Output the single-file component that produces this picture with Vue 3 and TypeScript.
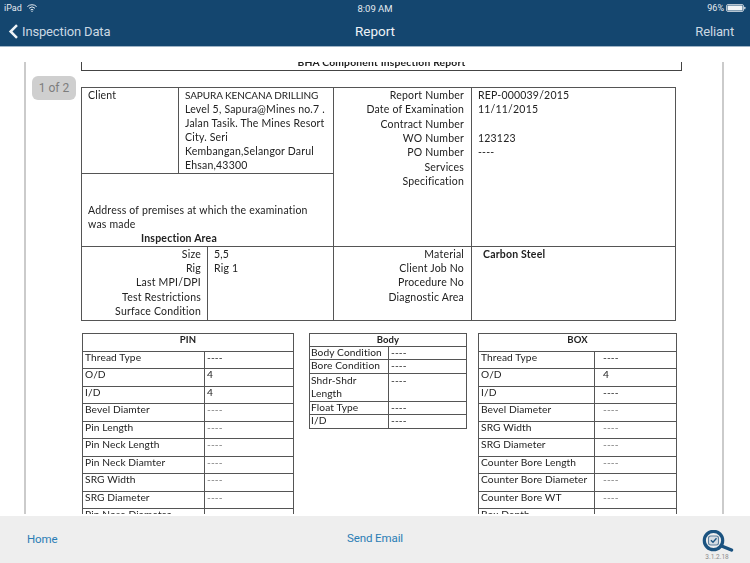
<template>
  <div class="screen">
    <header class="topbar">
      <div class="status">
        <div class="status-left">
          <span>iPad</span>
          <svg class="wifi" width="10" height="8" viewBox="0 0 10 8">
            <path d="M0.4 2.6 A6.6 6.6 0 0 1 9.6 2.6" />
            <path d="M2 4.3 A4.3 4.3 0 0 1 8 4.3" />
            <path d="M3.6 5.9 A2 2 0 0 1 6.4 5.9" />
            <circle cx="5" cy="7.2" r="0.7" />
          </svg>
        </div>
        <span class="status-time">8:09 AM</span>
        <div class="status-right">
          <span>96%</span>
          <svg width="20" height="8" viewBox="0 0 20 8">
            <rect x="0.5" y="0.5" width="17" height="7" rx="1.5" fill="none" stroke="#dfe6ec" stroke-width="0.8" />
            <rect x="1.5" y="1.5" width="15" height="5" rx="0.6" fill="#f2f5f7" />
            <rect x="18.2" y="2.7" width="1.2" height="2.6" rx="0.5" fill="#dfe6ec" />
          </svg>
        </div>
      </div>
      <nav class="navbar">
        <a class="back">
          <svg width="11" height="15" viewBox="0 0 11 15">
            <path d="M9 1.2 L2.6 7.5 L9 13.8" fill="none" stroke="#eef3f7" stroke-width="2.5" />
          </svg>
          <span>Inspection Data</span>
        </a>
        <span class="nav-title">Report</span>
        <span class="nav-right">Reliant</span>
      </nav>
    </header>

    <main class="viewer">
      <div class="page-badge">1 of 2</div>
      <section class="sheet">
        <div class="doc-title"><span>BHA Component Inspection Report</span></div>

        <table class="summary">
          <colgroup>
            <col style="width: 97px" />
            <col style="width: 29px" />
            <col style="width: 126px" />
            <col style="width: 138px" />
            <col style="width: 204px" />
          </colgroup>
          <tbody>
            <tr class="row-client">
              <td>Client</td>
              <td colspan="2" class="client-value">
                <div v-for="(line, i) in clientLines" :key="line" :class="{ caps: i === 0 }">{{ line }}</div>
              </td>
              <td rowspan="2" class="labels">
                <div v-for="line in reportLabels" :key="line">{{ line }}</div>
              </td>
              <td rowspan="2" class="values">
                <div v-for="(line, i) in reportValues" :key="i" class="line">{{ line }}</div>
              </td>
            </tr>
            <tr class="row-address">
              <td colspan="3" class="address">
                <div>Address of premises at which the examination</div>
                <div>was made</div>
                <div class="area-title">Inspection Area</div>
              </td>
            </tr>
            <tr class="row-area">
              <td colspan="2" class="labels tight">
                <div v-for="line in areaLabels" :key="line">{{ line }}</div>
              </td>
              <td class="area-value">
                <div>5,5</div>
                <div>Rig 1</div>
              </td>
              <td class="labels">
                <div>Material</div>
                <div>Client Job No</div>
                <div>Procedure No</div>
                <div>Diagnostic Area</div>
              </td>
              <td class="values"><div class="material">Carbon Steel</div></td>
            </tr>
          </tbody>
        </table>

        <div class="parts">
          <table v-for="part in parts" :key="part.title" class="part" :class="part.kind">
            <colgroup>
              <col class="col-name" />
              <col />
            </colgroup>
            <thead>
              <tr><th colspan="2">{{ part.title }}</th></tr>
            </thead>
            <tbody>
              <tr v-for="row in part.rows" :key="row[0]">
                <td class="name">{{ row[0] }}</td>
                <td class="val">{{ row[1] }}</td>
              </tr>
            </tbody>
          </table>
        </div>
      </section>
    </main>

    <footer class="toolbar">
      <a class="tool-left">Home</a>
      <a class="tool-center">Send Email</a>
      <div class="tool-right">
        <svg width="34" height="22" viewBox="0 0 34 22">
          <circle cx="13.5" cy="10.5" r="9.2" fill="none" stroke="#1b5380" stroke-width="3.2" />
          <rect x="8.5" y="6" width="10" height="9" rx="2.2" fill="#d5dde4" stroke="#5d7f9c" stroke-width="1.1" />
          <path d="M10.9 10.3 L13 12.3 L16.5 8.3" fill="none" stroke="#1b5380" stroke-width="1.3" />
          <path d="M21.5 16 L31.5 20" fill="none" stroke="#1b5380" stroke-width="3.4" stroke-linecap="round" />
        </svg>
        <span class="version">3.1.2.18</span>
      </div>
    </footer>
  </div>
</template>

<script setup lang="ts">
type Row = [string, string]

interface Part {
  title: string
  kind: string
  rows: Row[]
}

const clientLines = [
  'SAPURA KENCANA DRILLING',
  'Level 5, Sapura@Mines no.7 .',
  'Jalan Tasik. The Mines Resort',
  'City. Seri',
  'Kembangan,Selangor Darul',
  'Ehsan,43300'
]

const reportLabels = [
  'Report Number',
  'Date of Examination',
  'Contract Number',
  'WO Number',
  'PO Number',
  'Services',
  'Specification'
]

const reportValues = ['REP-000039/2015', '11/11/2015', '', '123123', '----']

const areaLabels = ['Size', 'Rig', 'Last MPI/DPI', 'Test Restrictions', 'Surface Condition']

const parts: Part[] = [
  {
    title: 'PIN',
    kind: 'part-pin',
    rows: [
      ['Thread Type', '----'],
      ['O/D', '4'],
      ['I/D', '4'],
      ['Bevel Diamter', '----'],
      ['Pin Length', '----'],
      ['Pin Neck Length', '----'],
      ['Pin Neck Diamter', '----'],
      ['SRG Width', '----'],
      ['SRG Diameter', '----'],
      ['Pin Nose Diameter', '----']
    ]
  },
  {
    title: 'Body',
    kind: 'part-body',
    rows: [
      ['Body Condition', '----'],
      ['Bore Condition', '----'],
      ['Shdr-Shdr\nLength', '----'],
      ['Float Type', '----'],
      ['I/D', '----']
    ]
  },
  {
    title: 'BOX',
    kind: 'part-box',
    rows: [
      ['Thread Type', '----'],
      ['O/D', '4'],
      ['I/D', '----'],
      ['Bevel Diameter', '----'],
      ['SRG Width', '----'],
      ['SRG Diameter', '----'],
      ['Counter Bore Length', '----'],
      ['Counter Bore Diameter', '----'],
      ['Counter Bore WT', '----'],
      ['Box Depth', '----']
    ]
  }
]
</script>

<style scoped>
.screen {
  width: 750px;
  height: 563px;
  display: flex;
  flex-direction: column;
  overflow: hidden;
  background: #fff;
  font-family: Roboto, "Liberation Sans", sans-serif;
}

.topbar {
  height: 47px;
  flex: none;
  box-sizing: border-box;
  background: #14466f;
  border-bottom: 1px solid #9fb4c6;
  color: #e3eaf0;
}

.status {
  height: 16px;
  display: grid;
  grid-template-columns: 1fr auto 1fr;
  align-items: center;
  padding: 0 4px;
  font-size: 9px;
}

.status-left {
  display: flex;
  align-items: center;
  gap: 5px;
}

.wifi path {
  fill: none;
  stroke: #e3eaf0;
  stroke-width: 1;
}

.wifi circle {
  fill: #e3eaf0;
}

.status-time {
  font-size: 9.5px;
}

.status-right {
  display: flex;
  justify-content: flex-end;
  align-items: center;
  gap: 2px;
}

.navbar {
  height: 30px;
  display: grid;
  grid-template-columns: 1fr auto 1fr;
  align-items: center;
  padding: 0 16px;
  font-size: 13px;
}

.back {
  display: flex;
  align-items: center;
  gap: 3px;
  margin-left: -8px;
  letter-spacing: -0.15px;
  color: #cbd8e3;
}

.nav-title {
  font-size: 13.5px;
  color: #eef3f7;
}

.nav-right {
  text-align: right;
  letter-spacing: -0.15px;
  color: #cbd8e3;
}

.viewer {
  flex: 1;
  min-height: 0;
  position: relative;
  display: flex;
  padding: 15px 26px 2px 24px;
}

.page-badge {
  position: absolute;
  left: 32px;
  top: 29px;
  width: 44px;
  height: 24px;
  line-height: 24px;
  border-radius: 6px;
  background: #cfcfcf;
  color: #7d7d7d;
  font-size: 12px;
  text-align: center;
  z-index: 1;
}

.sheet {
  flex: 1;
  box-sizing: border-box;
  overflow: hidden;
  border-left: 2px solid #cbcbcb;
  border-right: 2px solid #cbcbcb;
  padding-left: 55px;
  color: #222;
  font-family: Lato, "Open Sans", sans-serif;
  font-size: 10.5px;
  letter-spacing: 0.2px;
  filter: blur(0.35px);
}

.doc-title {
  display: flow-root;
  width: 599px;
  height: 8px;
  border: 1px solid #444;
  border-top: 0;
  text-align: center;
  font-weight: 700;
  font-size: 10.3px;
  line-height: 8px;
}

.doc-title span {
  display: block;
  margin-top: -4px;
}

table {
  border-collapse: collapse;
  table-layout: fixed;
}

.summary {
  width: 594px;
  margin-top: 16px;
}

.summary td {
  border: 1px solid #555;
  padding: 0;
  vertical-align: top;
  line-height: 14.35px;
  white-space: nowrap;
}

.row-client {
  height: 85px;
}

.row-address {
  height: 73px;
}

.row-area {
  height: 74px;
}

.summary td:first-child {
  padding-left: 6px;
}

.summary .client-value {
  padding-left: 6px;
  line-height: 14.1px;
}

.caps {
  font-size: 10px;
  letter-spacing: -0.1px;
}

.summary .labels {
  text-align: right;
  padding: 0 7px 0 0;
}

.summary .labels.tight {
  padding: 0 6px 0 0;
}

.summary .values {
  padding-left: 6px;
}

.line {
  min-height: 14.35px;
}

.address {
  vertical-align: bottom !important;
}

.area-title {
  padding-left: 53px;
  font-weight: 700;
}

.area-value {
  padding-left: 6px !important;
}

.material {
  padding-left: 5px;
  font-weight: 700;
}

.parts {
  display: flex;
  align-items: flex-start;
  gap: 15px;
  margin: 12px 0 0 1px;
}

.part {
  font-size: 10.2px;
  letter-spacing: 0.1px;
}

.part-pin {
  width: 212px;
}

.part-pin .col-name {
  width: 122px;
}

.part-body {
  width: 158px;
}

.part-body .col-name {
  width: 79px;
}

.part-box {
  width: 199px;
  margin-left: -4px;
}

.part-box .col-name {
  width: 116px;
}

.part th {
  border: 1px solid #555;
  height: 17px;
  padding: 0;
  font-size: 9.5px;
  line-height: 12px;
  vertical-align: top;
}

.part td {
  border: 1px solid #555;
  height: 16.5px;
  padding: 0 0 0 2px;
  line-height: 10px;
  vertical-align: top;
  white-space: pre-line;
}

.part-pin .val {
  padding-left: 2px;
}

.part-box .val {
  padding-left: 8px;
}

.part-pin tr:nth-child(n + 4) .val,
.part-box tr:nth-child(n + 4) .val {
  color: #777;
}

.part-body th {
  height: 12px;
}

.part-body td {
  height: 12.5px;
  line-height: 11.5px;
  padding-left: 1px;
}

.part-body tr:nth-child(3) td {
  height: 26px;
  line-height: 13.5px;
}

.part-body .val {
  padding-left: 2px;
}

.toolbar {
  height: 47px;
  flex: none;
  display: grid;
  grid-template-columns: 1fr auto 1fr;
  align-items: center;
  padding: 0 16px;
  background: #eeeeee;
  color: #2a7db5;
  font-size: 11.5px;
  letter-spacing: -0.1px;
}

.tool-left {
  margin: 0 0 1px 11px;
}

.tool-center {
  margin-bottom: 3px;
}

.tool-right {
  display: flex;
  flex-direction: column;
  align-items: center;
  justify-self: end;
  padding-top: 12px;
}

.version {
  font-size: 6.5px;
  color: #8b8b8b;
  margin-top: 1px;
  letter-spacing: 0;
}
</style>

<style>
html,
body {
  margin: 0;
  background: #fff;
}
</style>
